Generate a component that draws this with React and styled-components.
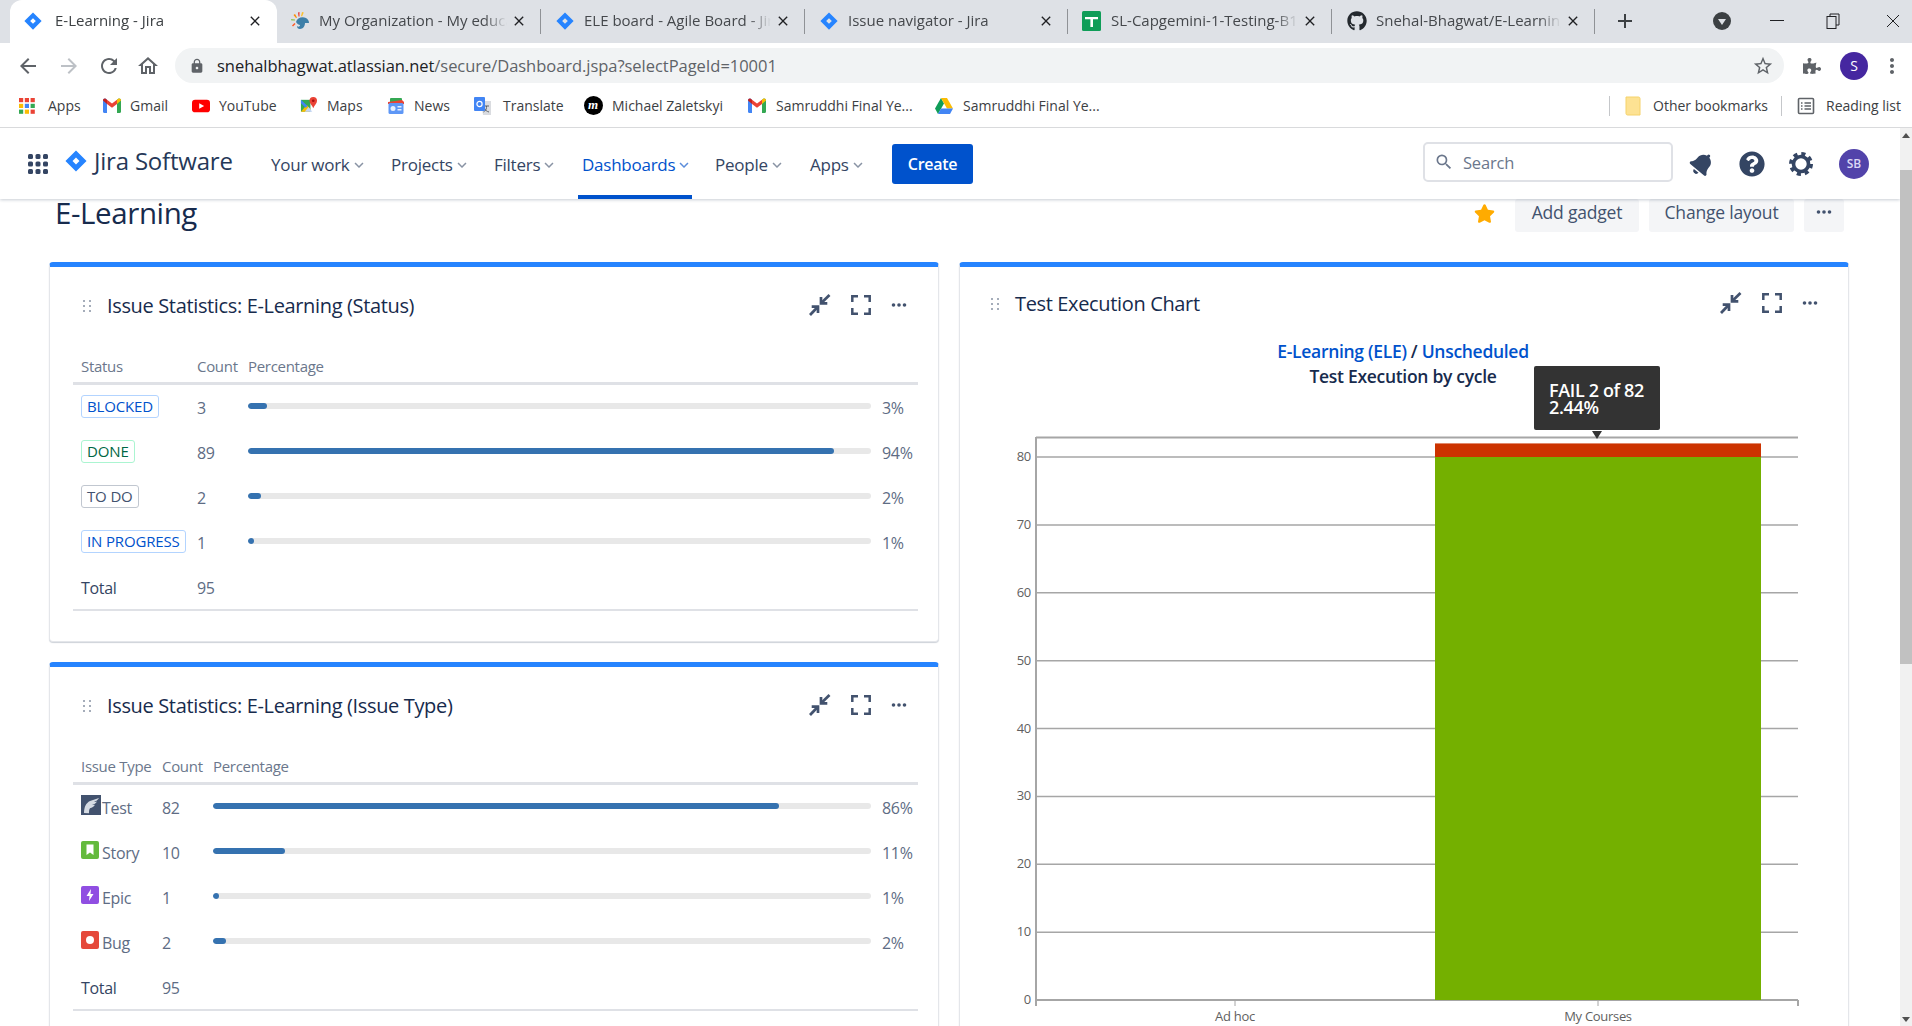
import styled, { createGlobalStyle } from "styled-components";
import { FaGithub, FaPuzzlePiece, FaBell, FaQuestionCircle, FaStar } from "react-icons/fa";
import {
  MdArrowBack,
  MdArrowForward,
  MdRefresh,
  MdOutlineHome,
  MdLock,
  MdStarBorder,
  MdMoreVert,
  MdClose,
  MdAdd,
  MdSearch,
  MdKeyboardArrowDown,
} from "react-icons/md";

const FONT = `"Open Sans", "Noto Sans", "Liberation Sans", sans-serif`;

const GlobalStyle = createGlobalStyle`
  html, body {
    margin: 0;
    padding: 0;
    height: 100%;
    overflow: hidden;
    background: #fff;
  }
  * { box-sizing: border-box; }
  body { font-family: ${FONT}; color: #172b4d; }
`;

const Page = styled.div`
  width: 1912px;
  height: 1026px;
  display: flex;
  flex-direction: column;
  overflow: hidden;
`;

/* browser chrome */
const TabStrip = styled.div`
  height: 43px;
  background: #dee1e6;
  display: flex;
  align-items: stretch;
  padding-left: 10px;
  flex: none;
`;
const Tab = styled.div`
  width: ${(p) => p.$w}px;
  flex: none;
  display: flex;
  align-items: center;
  padding: 0 14px 2px ${(p) => p.$pad}px;
  background: ${(p) => (p.$active ? "#fff" : "transparent")};
  border-radius: ${(p) => (p.$active ? "12px 12px 0 0" : "0")};
  position: relative;
  &::after {
    content: "";
    display: ${(p) => (p.$active ? "none" : "block")};
    position: absolute;
    right: 0;
    top: 9px;
    bottom: 9px;
    width: 1px;
    background: #8f9296;
  }
`;
const TabIcon = styled.span`
  width: 20px;
  flex: none;
  display: flex;
  align-items: center;
  justify-content: center;
  margin-right: ${(p) => (p.$active ? 12 : 9)}px;
`;
const TabTitle = styled.span`
  flex: 1;
  min-width: 0;
  margin-bottom: 2px;
  font-size: 15px;
  color: ${(p) => (p.$active ? "#3c4043" : "#45484c")};
  white-space: nowrap;
  overflow: hidden;
  -webkit-mask-image: linear-gradient(to right, #000 88%, transparent 100%);
`;
const TabClose = styled(MdClose)`
  flex: none;
  color: #202124;
  font-size: 16px;
  margin-left: 4px;
`;
const StripButtons = styled.div`
  display: flex;
  align-items: center;
  flex: 1;
  padding: 0 0 2px 18px;
  color: #3c4043;
`;
const WinButton = styled.span`
  display: flex;
  align-items: center;
  justify-content: center;
  width: ${(p) => p.$w}px;
  margin-left: ${(p) => p.$ml || 0}px;
`;
const Toolbar = styled.div`
  height: 45px;
  flex: none;
  display: flex;
  align-items: center;
  padding: 0 0 0 15px;
  background: #fff;
  color: #5f6368;
`;
const NavBtn = styled.span`
  width: ${(p) => p.$w || 40}px;
  flex: none;
  display: flex;
  justify-content: center;
  color: ${(p) => p.$color || "#5f6368"};
  font-size: 24px;
`;
const Omnibox = styled.div`
  width: 1609px;
  height: 35px;
  margin-left: 1px;
  border-radius: 18px;
  background: #f1f3f4;
  display: flex;
  align-items: center;
  padding: 0 10px 0 14px;
  flex: none;
`;
const Url = styled.span`
  flex: 1;
  margin-left: 12px;
  font-size: 16.5px;
  letter-spacing: -0.04px;
  color: #5f6368;
  b {
    font-weight: 400;
    color: #202124;
  }
`;
const BrowserAvatar = styled.span`
  width: 28px;
  height: 28px;
  flex: none;
  border-radius: 50%;
  background: #4527a0;
  color: #fff;
  display: flex;
  align-items: center;
  justify-content: center;
  font-size: 14px;
`;
const Bookmarks = styled.div`
  height: 40px;
  flex: none;
  border-bottom: 1px solid #d9dadc;
  display: flex;
  align-items: center;
  padding: 0 0 4px 18px;
  background: #fff;
`;
const Bookmark = styled.div`
  display: flex;
  align-items: center;
  width: ${(p) => p.$w}px;
  flex: none;
  gap: ${(p) => p.$gap || 11}px;
  font-size: 14px;
  letter-spacing: 0;
  color: #3c4043;
  white-space: nowrap;
`;
const BookmarkIcon = styled.span`
  width: 18px;
  height: 18px;
  flex: none;
  display: flex;
  align-items: center;
  justify-content: center;
`;
const BarSep = styled.span`
  width: 1px;
  height: 20px;
  background: #c5c7ca;
  flex: none;
  margin-right: ${(p) => p.$mr}px;
`;
const MichaelGlyph = styled.span`
  width: 19px;
  height: 19px;
  flex: none;
  border-radius: 50%;
  background: #000;
  color: #fff;
  font: italic 700 13px/18px "Liberation Serif", serif;
  text-align: center;
`;

/* everything under the bookmarks bar: app on the left, window scrollbar on the right */
const Viewport = styled.div`
  flex: 1;
  min-height: 0;
  display: flex;
`;
const AppArea = styled.div`
  width: 1900px;
  flex: none;
  display: flex;
  flex-direction: column;
  overflow: hidden;
`;

/* jira top nav */
const JiraNav = styled.header`
  height: 71px;
  flex: none;
  display: flex;
  align-items: center;
  position: relative;
  z-index: 2;
  padding-left: 28px;
  background: #fff;
  box-shadow: 0 1px 3px rgba(9, 30, 66, 0.22);
`;
const Brand = styled.div`
  display: flex;
  align-items: center;
  width: 206px;
  flex: none;
  margin-left: 17px;
  gap: 7px;
  margin-top: -6px;
  font-size: 24px;
  color: #253858;
  letter-spacing: -0.2px;
`;
const Menu = styled.nav`
  display: flex;
  align-items: stretch;
  height: 100%;
`;
const MenuItem = styled.div`
  display: flex;
  align-items: center;
  width: ${(p) => p.$w}px;
  padding-top: 2px;
  font-size: 17px;
  letter-spacing: -0.25px;
  color: ${(p) => (p.$on ? "#0052cc" : "#344563")};
  position: relative;
  padding-left: ${(p) => (p.$on ? 4 : 0)}px;
  margin-left: ${(p) => (p.$on ? -4 : 0)}px;
  svg {
    font-size: 18px;
    color: ${(p) => (p.$on ? "#5c8ddb" : "#8993a4")};
  }
  &::after {
    content: "";
    display: ${(p) => (p.$on ? "block" : "none")};
    position: absolute;
    left: 0;
    width: 114px;
    bottom: 0;
    height: 4px;
    background: #0052cc;
  }
`;
const CreateButton = styled.button`
  width: 81px;
  height: 40px;
  border: 0;
  border-radius: 3px;
  background: #0052cc;
  color: #fff;
  font: 600 16px ${FONT};
  letter-spacing: -0.3px;
`;
const NavRight = styled.div`
  display: flex;
  align-items: center;
  margin-left: auto;
  padding-right: 31px;
`;
const SearchBox = styled.div`
  width: 250px;
  height: 40px;
  border: 2px solid #dfe1e6;
  border-radius: 5px;
  display: flex;
  align-items: center;
  gap: 9px;
  padding-left: 9px;
  margin-right: 9px;
  margin-top: -3px;
  font-size: 16.5px;
  letter-spacing: -0.2px;
  color: #6b778c;
`;
const NavIcon = styled.span`
  width: ${(p) => p.$w}px;
  flex: none;
  display: flex;
  justify-content: center;
  color: #344563;
  font-size: ${(p) => p.$size}px;
`;
const TiltedBell = styled(FaBell)`
  transform: rotate(40deg);
`;
const JiraAvatar = styled.span`
  width: 30px;
  height: 30px;
  flex: none;
  border-radius: 50%;
  background: #5243aa;
  color: #dcd8f5;
  font-size: 12px;
  font-weight: 600;
  display: flex;
  align-items: center;
  justify-content: center;
  margin-left: 19px;
`;

/* page body */
const Content = styled.main`
  flex: 1;
  min-height: 0;
  overflow: hidden;
  padding-left: 49px;
`;
const TitleRow = styled.div`
  height: 63px;
  display: flex;
  align-items: flex-start;
`;
const Heading = styled.h1`
  margin: -1px 0 0 6px;
  font-size: 29.5px;
  line-height: 30px;
  font-weight: 500;
  letter-spacing: -0.4px;
  color: #172b4d;
`;
const Actions = styled.div`
  margin-left: auto;
  margin-right: 56px;
  display: flex;
  align-items: center;
  gap: 10px;
`;
const StarWrap = styled.span`
  font-size: 21px;
  display: flex;
  margin-right: 10px;
  margin-top: -5px;
  color: #ffab00;
`;
const ActionButton = styled.button`
  width: ${(p) => p.$w}px;
  height: 33px;
  border: 0;
  border-radius: 3px;
  background: #f4f5f7;
  color: #42526e;
  font: 400 17.5px ${FONT};
  letter-spacing: -0.2px;
  padding: 0 0 7px;
  display: flex;
  align-items: center;
  justify-content: center;
`;
const Columns = styled.div`
  display: grid;
  grid-template-columns: 890px 890px;
  column-gap: 20px;
  align-items: start;
`;
const Column = styled.div`
  display: flex;
  flex-direction: column;
  gap: 20px;
`;
const Card = styled.section`
  background: #fff;
  border: 1px solid #e4e6ea;
  border-top: 5px solid #2684ff;
  border-radius: 4px;
  box-shadow: 0 1px 1px rgba(9, 30, 66, 0.2);
  height: ${(p) => p.$h}px;
  padding: 0 20px 0 23px;
`;
const CardHeader = styled.div`
  height: ${(p) => p.$h}px;
  padding-left: ${(p) => p.$indent}px;
  display: flex;
  align-items: center;
`;
const CardTitle = styled.h2`
  margin: -2px 0 0 16px;
  font-size: 20px;
  font-weight: 500;
  letter-spacing: -0.35px;
  color: #172b4d;
`;
const CardTools = styled.div`
  margin-left: auto;
  display: flex;
  align-items: center;
  gap: 20px;
  margin-right: ${(p) => p.$mr}px;
  margin-top: -3px;
  color: #42526e;
`;
const StatRow = styled.div`
  display: grid;
  grid-template-columns: ${(p) => p.$first}px 51px ${(p) => p.$bar}px 1fr;
  height: 45px;
  align-items: center;
  padding-left: 8px;
  font-size: 16px;
  letter-spacing: -0.3px;
  color: #5e6c84;
`;
const HeadRow = styled(StatRow)`
  height: 40px;
  padding-top: 4px;
  border-bottom: 3px solid #dfe1e6;
  font-size: 15px;
  color: #6b778c;
`;
const TotalRow = styled(StatRow)`
  border-bottom: 2px solid #dfe1e6;
  height: 46px;
  padding-top: 2px;
`;
const TotalLabel = styled.span`
  color: #344563;
`;
const Lozenge = styled.span`
  justify-self: start;
  height: 23px;
  padding: 0 5px;
  border-radius: 3px;
  border: 1px solid ${(p) => p.$border};
  color: ${(p) => p.$color};
  font-size: 15px;
  letter-spacing: -0.15px;
  line-height: 21px;
  white-space: nowrap;
  margin-bottom: 3px;
`;
const Track = styled.div`
  height: 6px;
  border-radius: 3px;
  background: #e8e8e8;
  overflow: hidden;
  margin-bottom: 3px;
`;
const Fill = styled.div`
  height: 100%;
  border-radius: 3px;
  background: #3572b0;
`;
const Pct = styled.span`
  padding-left: 11px;
`;
const TypeCell = styled.span`
  display: flex;
  align-items: center;
`;
const TypeIcon = styled.span`
  display: flex;
  flex: none;
  margin: 0 1px 5px 0;
`;
const TypeName = styled.span`
  margin-top: 1px;
`;
const ChartTitle = styled.div`
  text-align: center;
  font-size: 17.5px;
  font-weight: 600;
  letter-spacing: -0.3px;
  line-height: 25px;
  color: #172b4d;
  margin-left: -2px;
  a {
    color: #0052cc;
    text-decoration: none;
  }
`;
const ChartBox = styled.div`
  position: relative;
  margin: -2px -20px 0 -23px;
`;
const Tooltip = styled.div`
  position: absolute;
  left: 574px;
  top: 27px;
  width: 126px;
  height: 64px;
  border-radius: 2px;
  background: #333;
  color: #fff;
  font-size: 18px;
  font-weight: 600;
  letter-spacing: -0.35px;
  line-height: 17px;
  padding: 16px 0 0 15px;
  &::after {
    content: "";
    position: absolute;
    left: 58px;
    top: 65px;
    border: 5px solid transparent;
    border-bottom: 0;
    border-top: 8px solid #333;
  }
`;
const PlotSvg = styled.svg`
  display: block;
`;
const Scrollbar = styled.div`
  width: 12px;
  flex: none;
  background: #f1f1f1;
  display: flex;
  flex-direction: column;
`;
const ScrollArrow = styled.span`
  height: 14px;
  flex: none;
  display: flex;
  align-items: center;
  justify-content: center;
  &::before {
    content: "";
    border: 4px solid transparent;
    ${(p) => (p.$up ? "border-bottom: 5px solid #505050; border-top: 0;" : "border-top: 5px solid #505050; border-bottom: 0;")}
  }
`;
const ScrollThumb = styled.div`
  height: 494px;
  margin-top: 28px;
  background: #c1c1c1;
  flex: none;
`;
const ScrollGap = styled.div`
  flex: 1;
`;

/* drawn icons */
const JiraMark = ({ size = 18 }) => (
  <svg width={size} height={size} viewBox="0 0 24 24">
    <path
      fillRule="evenodd"
      fill="#2684ff"
      d="M12 0.5 23.5 12 12 23.5 0.5 12Z M12 8.2 8.2 12 12 15.8 15.8 12Z"
    />
  </svg>
);
const ChameleonIcon = () => (
  <svg width="20" height="20" viewBox="0 0 20 20">
    <path d="M8 1.5 9.5 1 9.5 5.5 8.5 5.5Z" fill="#e53935" />
    <path d="M12 1 13.8 1.6 12 5.5 11 5Z" fill="#fbc02d" />
    <path d="M3.5 4 5 3 7 6.5 6 7Z" fill="#fb8c00" />
    <path d="M1 8 1.4 9.5 5 9.5 5 8.5Z" fill="#8bc34a" />
    <path d="M2 14.5 4.5 12 5.5 13 3 15.5Z" fill="#ff5722" />
    <path d="M6 11c1-4 6-6 10-4 2 1 3 3 3 5h-4c0 3-2 6-5 6-2 0-3-1-3-3 1 1 3 1 3-1-1 0-3-1-4-3Z" fill="#3d7fa8" />
  </svg>
);
const SheetsIcon = () => (
  <svg width="20" height="20" viewBox="0 0 20 20">
    <rect x="0" y="0" width="19" height="20" rx="1.5" fill="#0f9d58" />
    <path d="M3 6h13v2.2h-5V16H8.4V8.2H3Z" fill="#fff" />
  </svg>
);
const GmailIcon = () => (
  <svg width="18" height="15" viewBox="0 0 18 15">
    <path d="M0 2.5C0 .8 1.6 0 3 1l1 .8V15H1.2C.5 15 0 14.500 0 13.800Z" fill="#4285f4" />
    <path d="M18 2.500C18 .8 16.400 0 15 1l-1 .8V15h2.800c.7 0 1.200-.5 1.200-1.200Z" fill="#34a853" />
    <path d="M4 1.800 9 5.600 14 1.800V6L9 9.800 4 6Z" fill="#ea4335" />
    <path d="M0 2.500 4 6V1.800L3 1C1.600 0 0 .8 0 2.500Z" fill="#c5221f" />
    <path d="M18 2.500 14 6V1.800l1-.8c1.400-1 3-.2 3 1.500Z" fill="#fbbc04" />
  </svg>
);
const YoutubeIcon = () => (
  <svg width="20" height="14" viewBox="0 0 20 14">
    <rect width="20" height="14" rx="3.500" fill="#ff0000" />
    <path d="M8 4 13.500 7 8 10Z" fill="#fff" />
  </svg>
);
const MapsIcon = () => (
  <svg width="19" height="19" viewBox="0 0 19 19">
    <path d="M1 3.500 11 3.500 11 16H1Z" fill="#34a853" />
    <path d="M1 16 7 9 11 13 9 16Z" fill="#fbbc04" />
    <path d="M1 3.500 8 10 6 12 1 7Z" fill="#4285f4" />
    <path d="M5 16 9 11 13 16Z" fill="#c3d4f5" />
    <path d="M14 0.500a4 4 0 0 1 4 4c0 3-3 5-4 8-1-3-4-5-4-8a4 4 0 0 1 4-4Z" fill="#ea4335" />
    <circle cx="14" cy="4.500" r="1.400" fill="#a50e0e" />
  </svg>
);
const NewsIcon = () => (
  <svg width="18" height="18" viewBox="0 0 18 18">
    <rect x="3" y="1" width="12" height="6" rx="1" fill="#34a853" />
    <path d="M1 5 15 3 17 5 17 7H1Z" fill="#ea4335" />
    <rect x="1.500" y="6" width="15" height="11" rx="1.500" fill="#5e97f6" />
    <rect x="3.500" y="9" width="5" height="5" rx="2.500" fill="#e8f0fe" />
    <rect x="10.500" y="9" width="4" height="1.500" fill="#e8f0fe" />
    <rect x="10.500" y="12" width="4" height="1.500" fill="#e8f0fe" />
  </svg>
);
const TranslateIcon = () => (
  <svg width="18" height="18" viewBox="0 0 18 18">
    <path d="M7 4 17 4 17 18 9 18Z" fill="#dadce0" />
    <path d="M10 9h5M12.500 9v1.500c0 2-1.500 3.500-3 4.500m.5-4c1 2 3 3.500 5 4" stroke="#5f6368" fill="none" strokeWidth="1" />
    <rect x="0" y="0" width="11" height="14" rx="1" fill="#4285f4" />
    <circle cx="5.500" cy="7" r="2.600" fill="none" stroke="#fff" strokeWidth="1.200" />
  </svg>
);
const DriveIcon = () => (
  <svg width="18" height="16" viewBox="0 0 18 16">
    <path d="M6 0 0 10.500 3 16 9 5.500Z" fill="#0f9d58" />
    <path d="M6 0H12L18 10.500H12Z" fill="#fbbc04" />
    <path d="M3 16 6 10.500H18L15 16Z" fill="#4285f4" />
  </svg>
);
const AppsGrid = ({ colors, size = 4.200, gap = 5.800 }) => (
  <svg width="18" height="18" viewBox="0 0 18 18">
    {colors.map((c, i) => (
      <rect key={i} x={1 + (i % 3) * gap} y={1 + Math.floor(i / 3) * gap} width={size} height={size} fill={c} />
    ))}
  </svg>
);
const FolderIcon = () => (
  <svg width="16" height="20" viewBox="0 0 16 20">
    <path d="M1 1h12.500c.8 0 1.500.7 1.500 1.500V19H2.500C1.700 19 1 18.300 1 17.500Z" fill="#fde293" stroke="#f5d26b" />
  </svg>
);
const ReadingIcon = () => (
  <svg width="18" height="18" viewBox="0 0 18 18" fill="none" stroke="#5f6368" strokeWidth="1.600">
    <rect x="1.500" y="1.500" width="15" height="15" rx="1" />
    <path d="M4 6h1.500M7.500 6H14M4 9h1.500M7.500 9H14M4 12h1.500M7.500 12H14" />
  </svg>
);
const CollapseIcon = () => (
  <svg width="22" height="22" viewBox="0 0 22 22" fill="none" stroke="currentColor" strokeWidth="2.700">
    <path d="M12 3V9.300H18.300" />
    <path d="M12.800 8.500 20.500 1" />
    <path d="M2.700 12.700H9V19" />
    <path d="M8.200 13.500 1 21" />
  </svg>
);
const ExpandIcon = () => (
  <svg width="20" height="20" viewBox="0 0 20 20" fill="none" stroke="currentColor" strokeWidth="2.500">
    <path d="M1.300 7V1.300H7M13 1.300H18.700V7M18.700 13V18.700H13M7 18.700H1.300V13" />
  </svg>
);
const DotsIcon = () => (
  <svg width="16" height="4" viewBox="0 0 16 4" fill="currentColor">
    <circle cx="2.500" cy="2" r="1.800" />
    <circle cx="8" cy="2" r="1.800" />
    <circle cx="13.500" cy="2" r="1.800" />
  </svg>
);
const DragHandle = () => (
  <svg width="8" height="12" viewBox="0 0 8 12" fill="#a5adba">
    {[0, 1, 2].map((r) => (
      <g key={r}>
        <rect x="0" y={r * 5} width="2" height="2" />
        <rect x="6" y={r * 5} width="2" height="2" />
      </g>
    ))}
  </svg>
);
const WaffleIcon = () => (
  <svg width="20" height="20" viewBox="0 0 20 20" fill="#344563">
    {[0, 1, 2, 3, 4, 5, 6, 7, 8].map((i) => (
      <rect key={i} x={(i % 3) * 7.500} y={(Math.floor(i / 3)) * 7.500} width="5" height="5" rx="1.500" />
    ))}
  </svg>
);
const GearIcon = () => (
  <svg width="26" height="26" viewBox="0 0 26 26" fill="none" stroke="#344563">
    <circle cx="13" cy="13" r="7.500" strokeWidth="3.600" />
    <circle cx="13" cy="13" r="10" strokeWidth="4" strokeDasharray="4 3.854" />
  </svg>
);
const TestTypeIcon = () => (
  <svg width="20" height="20" viewBox="0 0 20 20">
    <rect width="20" height="20" fill="#42526e" />
    <path d="M3 18c0-6 2-10 6-12l9-3c-1 2-3 3-5 4 1 0 2 0 3-.5-1 2-3 3-5 3.500 1 .2 2 0 3-.3-1 2-3 3-5 3.500-1 1-1 3-1 5Z" fill="#d5dbe3" />
  </svg>
);
const StoryIcon = () => (
  <svg width="20" height="20" viewBox="0 0 20 20">
    <rect y="1" width="18" height="18" rx="2" fill="#63ba3c" />
    <path d="M5.500 4.500h7V15L9 12.500 5.500 15Z" fill="#fff" />
  </svg>
);
const EpicIcon = () => (
  <svg width="20" height="20" viewBox="0 0 20 20">
    <rect y="1" width="18" height="18" rx="2" fill="#904ee2" />
    <path d="M10 4 5.500 11H8.500L8 16 12.500 9H9.500Z" fill="#fff" />
  </svg>
);
const BugIcon = () => (
  <svg width="20" height="20" viewBox="0 0 20 20">
    <rect y="1" width="18" height="18" rx="2" fill="#e5493a" />
    <circle cx="9" cy="10" r="4" fill="#fff" />
  </svg>
);

const tabs = [
  { title: "My Organization - My education", icon: <ChameleonIcon />, w: 264, pad: 13 },
  { title: "ELE board - Agile Board - Jira", icon: <JiraMark />, w: 264, pad: 14 },
  { title: "Issue navigator - Jira", icon: <JiraMark />, w: 263, pad: 14 },
  { title: "SL-Capgemini-1-Testing-B1.xlsx", icon: <SheetsIcon />, w: 264, pad: 14 },
  { title: "Snehal-Bhagwat/E-Learning-App", icon: <FaGithub size={20} color="#24292e" />, w: 263, pad: 15 },
];

const statusRows = [
  { label: "BLOCKED", count: 3, pct: 3, fill: 19, border: "#b3d4ff", color: "#0052cc" },
  { label: "DONE", count: 89, pct: 94, fill: 586, border: "#abf5d1", color: "#006644" },
  { label: "TO DO", count: 2, pct: 2, fill: 13, border: "#c1c7d0", color: "#42526e" },
  { label: "IN PROGRESS", count: 1, pct: 1, fill: 6, border: "#b3d4ff", color: "#0052cc" },
];

const typeRows = [
  { label: "Test", icon: <TestTypeIcon />, count: 82, pct: 86, fill: 566 },
  { label: "Story", icon: <StoryIcon />, count: 10, pct: 11, fill: 72 },
  { label: "Epic", icon: <EpicIcon />, count: 1, pct: 1, fill: 6 },
  { label: "Bug", icon: <BugIcon />, count: 2, pct: 2, fill: 13 },
];

const yTicks = [0, 10, 20, 30, 40, 50, 60, 70, 80];

function CycleChart() {
  const y = (v) => 611 - v * 6.7875;
  return (
    <PlotSvg width="890" height="650" viewBox="0 0 890 650">
      <g stroke="#a6a6a6" fill="none">
        <path d="M76 48.500H838" strokeWidth="2" />
        <path d="M76 48V617M838 611V617" strokeWidth="2" />
        {yTicks.slice(1).map((v) => (
          <path key={v} d={`M76 ${y(v)}H838`} strokeWidth="1.500" />
        ))}
        <path d={`M76 ${y(0)}H838`} strokeWidth="2" />
        <path d={`M275 ${y(0)}V617M638 ${y(0)}V617`} strokeWidth="1" />
      </g>
      <rect x="475" y={y(82)} width="326" height={y(80) - y(82)} fill="#cc3300" />
      <rect x="475" y={y(80)} width="326" height={y(0) - y(80)} fill="#74b000" />
      <g fontFamily={FONT} fontSize="13" letterSpacing="-0.3" fill="#5f5f5f">
        {yTicks.map((v) => (
          <text key={v} x="71" y={y(v) + 4} textAnchor="end">
            {v}
          </text>
        ))}
        <text x="275" y="632" textAnchor="middle">Ad hoc</text>
        <text x="638" y="632" textAnchor="middle">My Courses</text>
      </g>
    </PlotSvg>
  );
}

function CardIcons({ mr }) {
  return (
    <CardTools $mr={mr}>
      <CollapseIcon />
      <ExpandIcon />
      <DotsIcon />
    </CardTools>
  );
}

export default function App() {
  return (
    <Page>
      <GlobalStyle />
      <TabStrip>
        <Tab $w={267} $pad={13} $active>
          <TabIcon $active><JiraMark /></TabIcon>
          <TabTitle $active>E-Learning - Jira</TabTitle>
          <TabClose />
        </Tab>
        {tabs.map((t) => (
          <Tab key={t.title} $w={t.w} $pad={t.pad}>
            <TabIcon>{t.icon}</TabIcon>
            <TabTitle>{t.title}</TabTitle>
            <TabClose />
          </Tab>
        ))}
        <StripButtons>
          <MdAdd size={24} color="#3c4043" />
          <WinButton $w={20} $ml={75}>
            <svg width="20" height="20" viewBox="0 0 20 20">
              <circle cx="10" cy="10" r="9" fill="#3c4043" />
              <path d="M6 8h8l-4 6Z" fill="#dee1e6" />
            </svg>
          </WinButton>
          <WinButton $w={20} $ml={35}>
            <svg width="14" height="2" viewBox="0 0 14 2"><rect width="14" height="1" fill="#202124" /></svg>
          </WinButton>
          <WinButton $w={20} $ml={36}>
            <svg width="14" height="16" viewBox="0 0 14 16" fill="none" stroke="#202124">
              <rect x="1" y="3.500" width="9" height="12" />
              <path d="M4 3.500V1H13V12H10" />
            </svg>
          </WinButton>
          <WinButton $w={20} $ml={40}>
            <svg width="14" height="14" viewBox="0 0 14 14" stroke="#202124" fill="none"><path d="M1 1 13 13M13 1 1 13" /></svg>
          </WinButton>
        </StripButtons>
      </TabStrip>

      <Toolbar>
        <NavBtn $w={26}><MdArrowBack /></NavBtn>
        <NavBtn $color="#bdc1c6" $w={55}><MdArrowForward /></NavBtn>
        <NavBtn $w={25}><MdRefresh /></NavBtn>
        <NavBtn $w={53}><MdOutlineHome /></NavBtn>
        <Omnibox>
          <MdLock size={16} color="#5f6368" />
          <Url><b>snehalbhagwat.atlassian.net</b>/secure/Dashboard.jspa?selectPageId=10001</Url>
          <MdStarBorder size={22} color="#5f6368" />
        </Omnibox>
        <NavBtn $w={56}><FaPuzzlePiece size={18} /></NavBtn>
        <BrowserAvatar>S</BrowserAvatar>
        <NavBtn $w={48}><MdMoreVert /></NavBtn>
      </Toolbar>

      <Bookmarks>
        <Bookmark $w={85} $gap={12}>
          <BookmarkIcon>
            <AppsGrid colors={["#ea4335", "#ea4335", "#ea4335", "#fbbc04", "#4285f4", "#34a853", "#34a853", "#fbbc04", "#ea4335"]} />
          </BookmarkIcon>
          Apps
        </Bookmark>
        <Bookmark $w={89} $gap={9}><BookmarkIcon><GmailIcon /></BookmarkIcon>Gmail</Bookmark>
        <Bookmark $w={108} $gap={9}><BookmarkIcon><YoutubeIcon /></BookmarkIcon>YouTube</Bookmark>
        <Bookmark $w={87} $gap={9}><BookmarkIcon><MapsIcon /></BookmarkIcon>Maps</Bookmark>
        <Bookmark $w={87} $gap={9}><BookmarkIcon><NewsIcon /></BookmarkIcon>News</Bookmark>
        <Bookmark $w={110} $gap={11}><BookmarkIcon><TranslateIcon /></BookmarkIcon>Translate</Bookmark>
        <Bookmark $w={164} $gap={10}><BookmarkIcon><MichaelGlyph>m</MichaelGlyph></BookmarkIcon>Michael Zaletskyi</Bookmark>
        <Bookmark $w={187} $gap={10}><BookmarkIcon><GmailIcon /></BookmarkIcon>Samruddhi Final Ye...</Bookmark>
        <Bookmark $w={674} $gap={10}><BookmarkIcon><DriveIcon /></BookmarkIcon>Samruddhi Final Ye...</Bookmark>
        <BarSep $mr={14} />
        <Bookmark $w={157} $gap={11}><BookmarkIcon><FolderIcon /></BookmarkIcon>Other bookmarks</Bookmark>
        <BarSep $mr={15} />
        <Bookmark $w={110} $gap={11}><BookmarkIcon><ReadingIcon /></BookmarkIcon>Reading list</Bookmark>
      </Bookmarks>

      <Viewport>
        <AppArea>
          <JiraNav>
            <WaffleIcon />
            <Brand><JiraMark size={22} />Jira Software</Brand>
            <Menu>
              <MenuItem $w={120}>Your work<MdKeyboardArrowDown /></MenuItem>
              <MenuItem $w={103}>Projects<MdKeyboardArrowDown /></MenuItem>
              <MenuItem $w={88}>Filters<MdKeyboardArrowDown /></MenuItem>
              <MenuItem $w={137} $on>Dashboards<MdKeyboardArrowDown /></MenuItem>
              <MenuItem $w={95}>People<MdKeyboardArrowDown /></MenuItem>
              <MenuItem $w={82}>Apps<MdKeyboardArrowDown /></MenuItem>
            </Menu>
            <CreateButton>Create</CreateButton>
            <NavRight>
              <SearchBox><MdSearch size={20} />Search</SearchBox>
              <NavIcon $w={40} $size={24}><TiltedBell /></NavIcon>
              <NavIcon $w={60} $size={26}><FaQuestionCircle /></NavIcon>
              <NavIcon $w={38} $size={26}><GearIcon /></NavIcon>
              <JiraAvatar>SB</JiraAvatar>
            </NavRight>
          </JiraNav>

          <Content>
            <TitleRow>
              <Heading>E-Learning</Heading>
              <Actions>
                <StarWrap><FaStar /></StarWrap>
                <ActionButton $w={124}>Add gadget</ActionButton>
                <ActionButton $w={145}>Change layout</ActionButton>
                <ActionButton $w={40}><DotsIcon /></ActionButton>
              </Actions>
            </TitleRow>
            <Columns>
              <Column>
                <Card $h={380}>
                  <CardHeader $h={78} $indent={10}>
                    <DragHandle />
                    <CardTitle>Issue Statistics: E-Learning (Status)</CardTitle>
                    <CardIcons mr={11} />
                  </CardHeader>
                  <HeadRow $first={116} $bar={623}>
                    <span>Status</span><span>Count</span><span>Percentage</span>
                  </HeadRow>
                  {statusRows.map((r) => (
                    <StatRow $first={116} $bar={623} key={r.label}>
                      <Lozenge $border={r.border} $color={r.color}>{r.label}</Lozenge>
                      <span>{r.count}</span>
                      <Track><Fill style={{ width: r.fill }} /></Track>
                      <Pct>{r.pct}%</Pct>
                    </StatRow>
                  ))}
                  <TotalRow $first={116} $bar={623}>
                    <TotalLabel>Total</TotalLabel><span>95</span>
                  </TotalRow>
                </Card>
                <Card $h={420}>
                  <CardHeader $h={78} $indent={10}>
                    <DragHandle />
                    <CardTitle>Issue Statistics: E-Learning (Issue Type)</CardTitle>
                    <CardIcons mr={11} />
                  </CardHeader>
                  <HeadRow $first={81} $bar={658}>
                    <span>Issue Type</span><span>Count</span><span>Percentage</span>
                  </HeadRow>
                  {typeRows.map((r) => (
                    <StatRow $first={81} $bar={658} key={r.label}>
                      <TypeCell><TypeIcon>{r.icon}</TypeIcon><TypeName>{r.label}</TypeName></TypeCell>
                      <span>{r.count}</span>
                      <Track><Fill style={{ width: r.fill }} /></Track>
                      <Pct>{r.pct}%</Pct>
                    </StatRow>
                  ))}
                  <TotalRow $first={81} $bar={658}>
                    <TotalLabel>Total</TotalLabel><span>95</span>
                  </TotalRow>
                </Card>
              </Column>
              <Column>
                <Card $h={800}>
                  <CardHeader $h={74} $indent={8}>
                    <DragHandle />
                    <CardTitle>Test Execution Chart</CardTitle>
                    <CardIcons mr={10} />
                  </CardHeader>
                  <ChartBox>
                    <ChartTitle>
                      <a href="#p">E-Learning (ELE)</a> / <a href="#u">Unscheduled</a>
                      <br />
                      Test Execution by cycle
                    </ChartTitle>
                    <Tooltip>FAIL 2 of 82<br />2.44%</Tooltip>
                    <CycleChart />
                  </ChartBox>
                </Card>
              </Column>
            </Columns>
          </Content>
        </AppArea>
        <Scrollbar>
          <ScrollArrow $up />
          <ScrollThumb />
          <ScrollGap />
          <ScrollArrow />
        </Scrollbar>
      </Viewport>
    </Page>
  );
}
